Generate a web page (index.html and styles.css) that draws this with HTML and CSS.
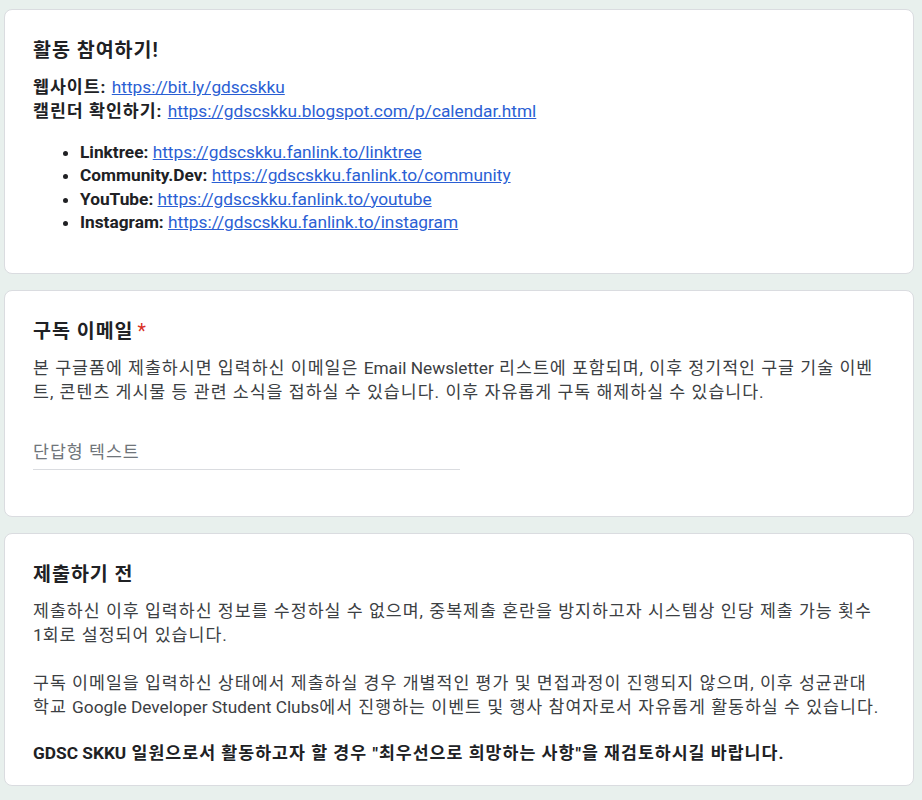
FILE: index.html
```html
<!DOCTYPE html>
<html lang="ko">
<head>
<meta charset="utf-8">
<title>GDSC SKKU</title>
<link rel="stylesheet" href="styles.css">
</head>
<body>
<main class="form">
  <section class="card">
    <h2 class="title">활동 참여하기!</h2>
    <div class="desc dark">
      <div><b>웹사이트:</b> <a class="en" href="#">https://bit.ly/gdscskku</a></div>
      <div><b>캘린더 확인하기:</b> <a class="en" href="#">https://gdscskku.blogspot.com/p/calendar.html</a></div>
    </div>
    <ul class="links">
      <li><b>Linktree:</b> <a href="#">https://gdscskku.fanlink.to/linktree</a></li>
      <li><b>Community.Dev:</b> <a href="#">https://gdscskku.fanlink.to/community</a></li>
      <li><b>YouTube:</b> <a href="#">https://gdscskku.fanlink.to/youtube</a></li>
      <li><b>Instagram:</b> <a href="#">https://gdscskku.fanlink.to/instagram</a></li>
    </ul>
  </section>

  <section class="card">
    <h2 class="title">구독 이메일 <span class="req">*</span></h2>
    <p class="desc">본 구글폼에 제출하시면 입력하신 이메일은 <span class="en">Email Newsletter</span> 리스트에 포함되며, 이후 정기적인 구글 기술 이벤트, 콘텐츠 게시물 등 관련 소식을 접하실 수 있습니다. 이후 자유롭게 구독 해제하실 수 있습니다.</p>
    <div class="field">
      <input class="input" type="text" placeholder="단답형 텍스트">
    </div>
  </section>

  <section class="card card-last">
    <h2 class="title">제출하기 전</h2>
    <div class="desc notes">
      <p>제출하신 이후 입력하신 정보를 수정하실 수 없으며, 중복제출 혼란을 방지하고자 시스템상 인당 제출 가능 횟수 <span class="en">1</span>회로 설정되어 있습니다.</p>
      <p>구독 이메일을 입력하신 상태에서 제출하실 경우 개별적인 평가 및 면접과정이 진행되지 않으며, 이후 성균관대학교 <span class="en">Google Developer Student Clubs</span>에서 진행하는 이벤트 및 행사 참여자로서 자유롭게 활동하실 수 있습니다.</p>
      <p class="strong"><span class="en">GDSC SKKU</span> 일원으로서 활동하고자 할 경우 "최우선으로 희망하는 사항"을 재검토하시길 바랍니다.</p>
    </div>
  </section>
</main>
</body>
</html>
```

FILE: styles.css
```css
html, body {
  margin: 0;
  padding: 0;
  background: #e8f0ed;
}

body {
  font-family: Roboto, "Noto Sans CJK KR", sans-serif;
  color: #202124;
}

.form {
  display: flex;
  flex-direction: column;
  gap: 16px;
  width: 910px;
  padding: 9px 0 0 4px;
}

.card {
  background: #fff;
  border: 1px solid #dadce0;
  border-radius: 8px;
  padding: 25px 32px 23px 28px;
  box-sizing: border-box;
}

.card-last {
  padding-bottom: 20px;
}

.title {
  margin: 0;
  font-size: 19.5px;
  line-height: 32px;
  font-weight: 700;
  letter-spacing: 1px;
  color: #202124;
}

.req {
  color: #d93025;
  font-weight: 400;
  letter-spacing: 0;
  margin-left: -2px;
}

.desc {
  margin: 8px 0 0;
  font-size: 17.3px;
  line-height: 24px;
  letter-spacing: 1px;
  color: #3c4043;
}

.desc.dark {
  color: #202124;
}

.en {
  letter-spacing: 0;
}

a {
  color: #2b5fd4;
  text-decoration: underline;
}

.links {
  margin: 18px 0 16px;
  padding-left: 47px;
  font-size: 17.3px;
  line-height: 23.3px;
  color: #202124;
}

.field {
  margin: 36px 0 23px;
  width: 427px;
}

.input {
  display: block;
  width: 100%;
  box-sizing: border-box;
  border: 0;
  border-bottom: 1px solid #dadce0;
  padding: 0 0 5px;
  margin: 0;
  font-family: Roboto, "Noto Sans CJK KR", sans-serif;
  font-size: 17.3px;
  line-height: 24px;
  letter-spacing: 1px;
  height: 30px;
  color: #202124;
  background: transparent;
  outline: none;
}

.input::placeholder {
  color: #70757a;
}

.notes p {
  margin: 0 0 24px;
}

.notes p.strong {
  margin: -2px 0 0;
  font-weight: 700;
  color: #202124;
}
```
